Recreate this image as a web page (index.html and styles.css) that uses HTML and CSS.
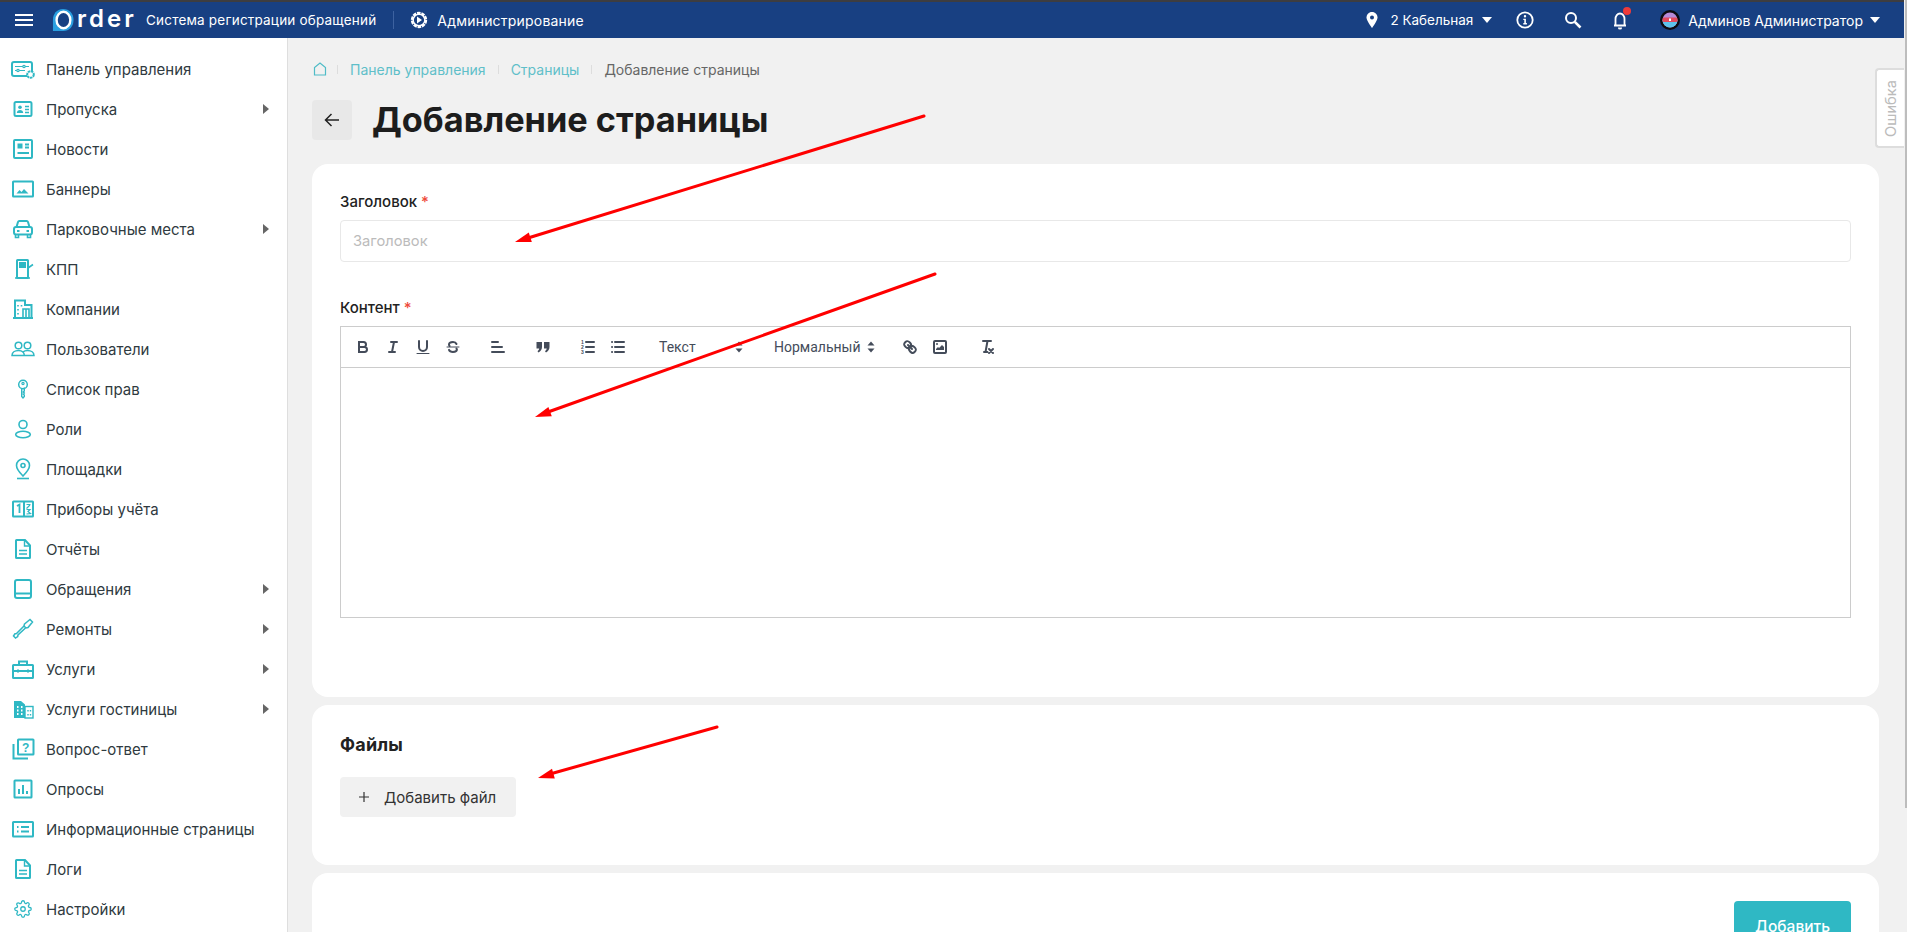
FILE: index.html

```html
<!DOCTYPE html>
<html lang="ru">
<head>
    <meta charset="UTF-8">
    <meta name="viewport" content="width=device-width, initial-scale=1.0">
    <title>Добавление страницы</title>
    <link rel="stylesheet" href="styles.css">
</head>
<body>
    <div class="page">
        <div class="app">
            <!-- Top bar -->
            <header class="topbar">
                <button class="burger"><span></span><span></span><span></span></button>
                <div class="logo">
                    <svg class="logo-mark" width="22" height="26" viewBox="0 0 24 26">
                        <path d="M12 1C5 1 1 6.500 1 13v12h11c7 0 11.500-5 11.500-12S19 1 12 1z" fill="#2a9fe0"/>
                        <ellipse cx="12.500" cy="13" rx="7.500" ry="9" fill="#184082" stroke="#fff" stroke-width="2.600"/>
                    </svg>
                    <span class="logo-text">rder</span>
                </div>
                <span class="topbar-title">Система регистрации обращений</span>
                <span class="topbar-divider"></span>
                <svg class="admin-icon" width="20" height="20" viewBox="0 0 20 20">
                    <circle cx="10" cy="10" r="7" fill="none" stroke="#fff" stroke-width="2.400" stroke-dasharray="3.500 .9"/>
                    <circle cx="10" cy="10" r="5.800" fill="none" stroke="#fff" stroke-width="1.400"/>
                    <path d="M8 6.500l5 3.500-5 3.500z" fill="#fff"/>
                </svg>
                <span class="topbar-admin">Администрирование</span>

                <div class="topbar-right">
                    <svg class="pin-icon" width="14" height="18" viewBox="0 0 14 18">
                        <path d="M7 1C3.700 1 1.500 3.500 1.500 6.500 1.500 10 7 17 7 17s5.500-7 5.500-10.500C12.500 3.500 10.300 1 7 1z" fill="#fff"/>
                        <circle cx="7" cy="6.500" r="2" fill="#184082"/>
                    </svg>
                    <span class="site-name">2 Кабельная</span>
                    <span class="caret"></span>
                    <svg class="info-icon" width="18" height="18" viewBox="0 0 18 18">
                        <circle cx="9" cy="9" r="7.700" fill="none" stroke="#fff" stroke-width="1.800"/>
                        <circle cx="9" cy="5.300" r="1.200" fill="#fff"/>
                        <path d="M7.300 7.700h2.600v4.400h1v1.300H7.300v-1.300h1V9h-1z" fill="#fff"/>
                    </svg>
                    <svg class="search-icon" width="18" height="18" viewBox="0 0 18 18">
                        <circle cx="7" cy="7" r="5" fill="none" stroke="#fff" stroke-width="2"/>
                        <path d="M10.800 10.800L16.500 16.500" stroke="#fff" stroke-width="2.600"/>
                    </svg>
                    <div class="bell">
                        <svg width="18" height="20" viewBox="0 0 18 20">
                            <path d="M3 15.500h12M4.500 15V9c0-3 2-5.500 4.500-5.500S13.500 6 13.500 9v6" fill="none" stroke="#fff" stroke-width="1.800"/>
                            <path d="M7 17.500h4v.5a2 1.500 0 0 1-4 0z" fill="#fff"/>
                        </svg>
                        <span class="bell-dot"></span>
                    </div>
                    <svg class="avatar" width="20" height="20" viewBox="0 0 20 20">
                        <circle cx="10" cy="10" r="10" fill="#0b0b10"/>
                        <circle cx="10" cy="10" r="7.500" fill="#b58ad8"/>
                        <path d="M2.500 10a7.500 7.500 0 0 0 15 0z" fill="#5cc3ec"/>
                        <rect x="2.500" y="7.500" width="15" height="4.500" rx="1.500" fill="#e2495c"/>
                        <rect x="9" y="8.500" width="2" height="2.500" fill="#fff"/>
                    </svg>
                    <span class="user-name">Админов Администратор</span>
                    <span class="caret caret-user"></span>
                </div>
            </header>

            <div class="layout">
                <!-- Side menu -->
                <nav class="sidebar">
                    <a class="side-item">
                        <svg class="side-icon" viewBox="0 0 24 24"><rect x="1" y="5" width="20" height="14" rx="2"/><path d="M4 9.500h14M4 13.500h10" stroke-width="1.200"/><circle cx="13" cy="9.500" r="1.200" fill="#fff" stroke-width="1.200"/><circle cx="7" cy="13.500" r="1.200" fill="#fff" stroke-width="1.200"/><circle cx="19.500" cy="17.500" r="3.300" fill="#fff" stroke-dasharray="2.500 .6"/></svg>
                        <span class="side-label">Панель управления</span>
                    </a>
                    <a class="side-item has-sub">
                        <svg class="side-icon" viewBox="0 0 24 24"><rect x="3.500" y="5" width="17" height="14" rx="1.500"/><circle cx="9" cy="10.300" r="1.800" class="solid"/><path d="M5.800 16c0-2 1.400-3 3.200-3s3.200 1 3.200 3z" class="solid"/><path d="M14 9.500h4M14 12.500h4M14 15.500h4" stroke-width="1.400"/></svg>
                        <span class="side-label">Пропуска</span>
                        <span class="side-arrow"></span>
                    </a>
                    <a class="side-item">
                        <svg class="side-icon" viewBox="0 0 24 24"><rect x="3" y="3" width="18" height="18" rx="1"/><rect x="6.500" y="6.500" width="5" height="5" class="solid"/><path d="M14 7.500h4M14 10.500h4M6.500 16h11.500"/></svg>
                        <span class="side-label">Новости</span>
                    </a>
                    <a class="side-item">
                        <svg class="side-icon" viewBox="0 0 24 24"><rect x="2" y="4.500" width="20" height="15" rx=".5"/><path d="M5.500 16.500l3-3.500 2 2 2.500-3 4.500 4.500z" class="solid"/></svg>
                        <span class="side-label">Баннеры</span>
                    </a>
                    <a class="side-item has-sub">
                        <svg class="side-icon" viewBox="0 0 24 24"><path d="M5.500 10l1.500-5c.2-.6.700-1 1.300-1h7.400c.6 0 1.100.4 1.300 1l1.500 5"/><rect x="3" y="10" width="18" height="7.500" rx="2"/><path d="M6 14h2.500M15.500 14H18"/><path d="M4.500 18v2.500h3V18M16.500 18v2.500h3V18" stroke-width="1.600"/></svg>
                        <span class="side-label">Парковочные места</span>
                        <span class="side-arrow"></span>
                    </a>
                    <a class="side-item">
                        <svg class="side-icon" viewBox="0 0 24 24"><rect x="6" y="3" width="11" height="18" rx=".5"/><rect x="8" y="5" width="7" height="6" class="solid"/><path d="M4 21h15M17 11l5-3.500" stroke-width="1.600"/></svg>
                        <span class="side-label">КПП</span>
                    </a>
                    <a class="side-item">
                        <svg class="side-icon" viewBox="0 0 24 24"><path d="M4 20.500V3.500h10v4.500h6.500v12.500"/><path d="M2 21h20"/><path d="M7 8v1.500M7 12v1.500M7 16v1.500M10.500 8v1.500" stroke-width="1.600"/><path d="M12 20v-8h6v8M15 12v8" stroke-width="1.600"/></svg>
                        <span class="side-label">Компании</span>
                    </a>
                    <a class="side-item">
                        <svg class="side-icon" viewBox="0 0 24 24"><circle cx="7.500" cy="8.500" r="3.300" stroke-width="1.500"/><circle cx="16.500" cy="8.500" r="3.300" stroke-width="1.500"/><path d="M1 18.500c0-3 2.800-5 6.500-5 2 0 3.500.6 4.500 1.500 1-.9 2.500-1.500 4.500-1.500 3.700 0 6.500 2 6.500 5z" stroke-width="1.500"/><path d="M12 15c1 .8 1.300 2 1.300 3.500" stroke-width="1.500"/></svg>
                        <span class="side-label">Пользователи</span>
                    </a>
                    <a class="side-item">
                        <svg class="side-icon" viewBox="0 0 24 24"><circle cx="12" cy="7.500" r="4.300" stroke-width="1.500"/><circle cx="12" cy="6.500" r="1.100" stroke-width="1.200"/><path d="M10.700 11.500v8l1.300 1.500 1.300-1.500v-1.500l-1-1 1-1-1-1 1-1v-3.500" stroke-width="1.400"/></svg>
                        <span class="side-label">Список прав</span>
                    </a>
                    <a class="side-item">
                        <svg class="side-icon" viewBox="0 0 24 24"><circle cx="12" cy="7.500" r="4" stroke-width="1.600"/><ellipse cx="12" cy="17.500" rx="7.300" ry="3.300" stroke-width="1.600"/></svg>
                        <span class="side-label">Роли</span>
                    </a>
                    <a class="side-item">
                        <svg class="side-icon" viewBox="0 0 24 24"><path d="M12 19C8 15 5.500 12 5.500 8.500a6.500 6.500 0 0 1 13 0C18.500 12 16 15 12 19z" stroke-width="1.600"/><circle cx="12" cy="8.500" r="2" stroke-width="1.600"/><path d="M6 21.500h12" stroke-width="1.600"/></svg>
                        <span class="side-label">Площадки</span>
                    </a>
                    <a class="side-item">
                        <svg class="side-icon" viewBox="0 0 24 24"><rect x="2" y="4.500" width="20" height="15" rx=".5"/><path d="M13 4.500v15"/><path d="M6 9l2.500-1.500V16" stroke-width="1.800"/><path d="M15.500 7.500h4M19 8l-3.500 3.500M15.500 12.500h3.500l-2 2 2.500 2-4 .5" stroke-width="1.200"/></svg>
                        <span class="side-label">Приборы учёта</span>
                    </a>
                    <a class="side-item">
                        <svg class="side-icon" viewBox="0 0 24 24"><path d="M5.500 3h8.500l5 5.500v12c0 .3-.2.500-.5.500h-13c-.3 0-.5-.2-.5-.5v-17c0-.3.2-.5.500-.5z"/><path d="M13.500 3v6h5.500M8 13.500h8M8 17h8" stroke-width="1.400"/></svg>
                        <span class="side-label">Отчёты</span>
                    </a>
                    <a class="side-item has-sub">
                        <svg class="side-icon" viewBox="0 0 24 24"><rect x="4" y="3" width="16" height="18" rx="2"/><path d="M4 16.500h16"/></svg>
                        <span class="side-label">Обращения</span>
                        <span class="side-arrow"></span>
                    </a>
                    <a class="side-item has-sub">
                        <svg class="side-icon" viewBox="0 0 24 24"><path d="M13.500 7l5.500-4.500 2.500 2.500-4.500 5.500-2 .5-2-2z" stroke-width="1.500"/><path d="M13 9l-7.500 7.500-1.500.3-1.500 2.200 2 2 2.200-1.500.3-1.500L14.500 11" stroke-width="1.500"/></svg>
                        <span class="side-label">Ремонты</span>
                        <span class="side-arrow"></span>
                    </a>
                    <a class="side-item has-sub">
                        <svg class="side-icon" viewBox="0 0 24 24"><rect x="2" y="8" width="20" height="13" rx=".5"/><path d="M8 8V4.500h8V8M2 14h20"/><path d="M7 12.500v3M17 12.500v3" stroke-width="2"/></svg>
                        <span class="side-label">Услуги</span>
                        <span class="side-arrow"></span>
                    </a>
                    <a class="side-item has-sub">
                        <svg class="side-icon" viewBox="0 0 24 24"><path d="M3 21V4h7l4 3.500V21z" class="solid"/><rect x="14" y="9.500" width="8" height="11.500" stroke-width="1.400"/><path d="M6 10h1.500M10 10h1.500M6 13.500h1.500M10 13.500h1.500M6 17h1.500M10 17h1.500" stroke="#fff"/><path d="M17 13v1.500M19.500 13v1.500M17 17v1.500M19.500 17v1.500" stroke-width="1.400"/></svg>
                        <span class="side-label">Услуги гостиницы</span>
                        <span class="side-arrow"></span>
                    </a>
                    <a class="side-item">
                        <svg class="side-icon" viewBox="0 0 24 24"><rect x="7" y="2.500" width="15.500" height="15" rx=".5"/><path d="M2.500 7v14.500H17"/><text x="14.700" y="14.500" class="icon-char">?</text></svg>
                        <span class="side-label">Вопрос-ответ</span>
                    </a>
                    <a class="side-item">
                        <svg class="side-icon" viewBox="0 0 24 24"><rect x="3.500" y="3.500" width="17" height="17" rx=".5"/><path d="M8 17v-5M12 17V8M16 17v-3"/></svg>
                        <span class="side-label">Опросы</span>
                    </a>
                    <a class="side-item">
                        <svg class="side-icon" viewBox="0 0 24 24"><rect x="2" y="5" width="20" height="14.500" rx=".5"/><path d="M6 10h1.500M10 10h8M6 14.500h1.500M10 14.500h8"/></svg>
                        <span class="side-label">Информационные страницы</span>
                    </a>
                    <a class="side-item">
                        <svg class="side-icon" viewBox="0 0 24 24"><path d="M5.500 3h8.500l5 5.500v12c0 .3-.2.500-.5.500h-13c-.3 0-.5-.2-.5-.5v-17c0-.3.2-.5.500-.5z"/><path d="M13.500 3v6h5.500M8 13.500h8M8 17h8" stroke-width="1.400"/></svg>
                        <span class="side-label">Логи</span>
                    </a>
                    <a class="side-item">
                        <svg class="side-icon gear-icon" viewBox="0 0 24 24"><circle cx="12" cy="12" r="3"/><path d="M19.400 15a1.650 1.650 0 0 0 .33 1.820l.06.06a2 2 0 0 1 0 2.830 2 2 0 0 1-2.830 0l-.06-.06a1.650 1.650 0 0 0-1.820-.33 1.650 1.650 0 0 0-1 1.510V21a2 2 0 0 1-2 2 2 2 0 0 1-2-2v-.09A1.650 1.650 0 0 0 9 19.400a1.650 1.650 0 0 0-1.820.33l-.06.06a2 2 0 0 1-2.830 0 2 2 0 0 1 0-2.830l.06-.06a1.650 1.650 0 0 0 .33-1.820 1.650 1.650 0 0 0-1.510-1H3a2 2 0 0 1-2-2 2 2 0 0 1 2-2h.09A1.650 1.650 0 0 0 4.600 9a1.650 1.650 0 0 0-.33-1.820l-.06-.06a2 2 0 0 1 0-2.830 2 2 0 0 1 2.830 0l.06.06a1.650 1.650 0 0 0 1.820.33H9a1.650 1.650 0 0 0 1-1.510V3a2 2 0 0 1 2-2 2 2 0 0 1 2 2v.09a1.650 1.650 0 0 0 1 1.510 1.650 1.650 0 0 0 1.820-.33l.06-.06a2 2 0 0 1 2.830 0 2 2 0 0 1 0 2.830l-.06.06a1.650 1.650 0 0 0-.33 1.820V9a1.650 1.650 0 0 0 1.510 1H21a2 2 0 0 1 2 2 2 2 0 0 1-2 2h-.09a1.650 1.650 0 0 0-1.510 1z"/></svg>
                        <span class="side-label">Настройки</span>
                    </a>
                </nav>

                <!-- Main content -->
                <main class="content">
                    <div class="crumbs">
                        <svg class="crumb-home" width="14" height="14" viewBox="0 0 14 14"><path d="M1.500 13V5.500L7 1l5.500 4.500V13z" fill="none" stroke="#4fbcc7" stroke-width="1.200"/></svg>
                        <span class="crumb-sep"></span>
                        <a class="crumb-link">Панель управления</a>
                        <span class="crumb-sep"></span>
                        <a class="crumb-link">Страницы</a>
                        <span class="crumb-sep"></span>
                        <span class="crumb-current">Добавление страницы</span>
                    </div>

                    <div class="page-head">
                        <button class="back-btn">
                            <svg width="20" height="20" viewBox="0 0 20 20"><path d="M17 10H3.500M9.500 4l-6 6 6 6" fill="none" stroke="#222" stroke-width="1.500"/></svg>
                        </button>
                        <h1 class="page-title">Добавление страницы</h1>
                    </div>

                    <section class="card card-main">
                        <label class="field-label">Заголовок <span class="req">*</span></label>
                        <input class="text-input" type="text" placeholder="Заголовок">

                        <label class="field-label">Контент <span class="req">*</span></label>
                        <div class="editor">
                            <div class="toolbar">
                                <div class="tb-group">
                                    <button class="tb-btn"><svg viewBox="0 0 18 18"><path d="M5 4h4.500a2.500 2.500 0 0 1 0 5H5zM5 9h5.500a2.500 2.500 0 0 1 0 5H5z"/></svg></button>
                                    <button class="tb-btn"><svg viewBox="0 0 18 18"><path d="M7 4h6M5 14h6M8 14l2-10"/></svg></button>
                                    <button class="tb-btn"><svg viewBox="0 0 18 18"><path d="M5 3v6a4 4 0 0 0 8 0V3"/><path d="M3 15.500h12" stroke-width="1"/></svg></button>
                                    <button class="tb-btn"><svg viewBox="0 0 18 18"><path d="M3 9h12" stroke-width="1"/><path d="M12.500 6c-.5-1.200-2-2-3.500-2-2 0-4 1-4 2.500 0 .6.200 1.100.6 1.500M12.500 10.500c.2.400.4.800.4 1.100 0 1.500-2 2.400-4 2.400-1.700 0-3.400-.8-3.900-2.100"/></svg></button>
                                </div>
                                <div class="tb-group">
                                    <button class="tb-btn"><svg viewBox="0 0 18 18"><path d="M3 4h6M3 9h10M3 14h12"/></svg></button>
                                </div>
                                <div class="tb-group">
                                    <button class="tb-btn"><svg viewBox="0 0 18 18"><path class="tb-fill" d="M2.500 4h5.500v5c0 2.500-1.500 4.500-3.500 5.500l-1-1.300c1-.7 1.600-1.700 1.700-2.700H2.500z"/><path class="tb-fill" d="M10 4h5.500v5c0 2.500-1.500 4.500-3.500 5.500l-1-1.300c1-.7 1.600-1.700 1.700-2.700H10z"/></svg></button>
                                </div>
                                <div class="tb-group">
                                    <button class="tb-btn"><svg viewBox="0 0 18 18"><path d="M7 4h8M7 9h8M7 14h8"/><text x="2" y="5.800" class="tb-num">1</text><text x="2" y="10.800" class="tb-num">2</text><text x="2" y="15.800" class="tb-num">3</text></svg></button>
                                    <button class="tb-btn"><svg viewBox="0 0 18 18"><path d="M6 4h9M6 9h9M6 14h9M3 4h.1M3 9h.1M3 14h.1"/></svg></button>
                                </div>
                                <div class="tb-group">
                                    <div class="tb-picker picker-font">
                                        <span>Текст</span>
                                        <svg viewBox="0 0 18 18"><path d="M5.500 7.500L9 3.500l3.500 4zM5.500 10.500L9 14.500l3.500-4z" class="tb-fill"/></svg>
                                    </div>
                                </div>
                                <div class="tb-group">
                                    <div class="tb-picker picker-size">
                                        <span>Нормальный</span>
                                        <svg viewBox="0 0 18 18"><path d="M5.500 7.500L9 3.500l3.500 4zM5.500 10.500L9 14.500l3.500-4z" class="tb-fill"/></svg>
                                    </div>
                                </div>
                                <div class="tb-group">
                                    <button class="tb-btn"><svg viewBox="0 0 18 18"><path d="M7 7l4 4"/><path d="M8.900 4.577a3.476 3.476 0 0 1 .36 4.679A3.476 3.476 0 0 1 4.577 8.900C3.185 7.500 2.035 6.400 4.217 4.217S7.500 3.185 8.900 4.577zM13.423 9.100a3.476 3.476 0 0 0-4.679-.36 3.476 3.476 0 0 0 .36 4.679c1.392 1.392 2.500 2.542 4.679.36S14.815 10.500 13.423 9.100z"/></svg></button>
                                    <button class="tb-btn"><svg viewBox="0 0 18 18"><rect x="3" y="3" width="12" height="12" rx="1"/><circle cx="6" cy="6" r="1" class="tb-fill"/><path d="M5 12v-1l2-2 1 1 3-3 2 2v3z" class="tb-fill"/></svg></button>
                                </div>
                                <div class="tb-group tb-group-clean">
                                    <button class="tb-btn"><svg viewBox="0 0 18 18"><path d="M5 3h8M6 14h3.400M9.500 3L7.500 14"/><path d="M11 11l4 4M15 11l-4 4"/></svg></button>
                                </div>
                            </div>
                            <div class="editor-area"></div>
                        </div>
                    </section>

                    <section class="card card-files">
                        <h2 class="card-title">Файлы</h2>
                        <button class="file-btn">
                            <svg width="14" height="14" viewBox="0 0 14 14"><path d="M7 2v10M2 7h10" stroke="#333" stroke-width="1.200"/></svg>
                            <span>Добавить файл</span>
                        </button>
                    </section>

                    <section class="card card-actions">
                        <button class="submit-btn">Добавить</button>
                    </section>

                    <div class="error-tab"><span>Ошибка</span></div>
                </main>
            </div>
        </div>

        <div class="scroll-track"><div class="scroll-thumb"></div></div>
    </div>

    <!-- Red annotation arrows drawn over the screenshot -->
    <svg class="annotations" width="1907" height="932" viewBox="0 0 1907 932">
        <g fill="#f00" stroke="none">
            <polygon points="515,242 531.800,242.100 528.800,232.600"/>
            <polygon points="535,417 551.800,416.300 548.400,406.900"/>
            <polygon points="538,778 554.800,778.400 552,768.800"/>
        </g>
        <g stroke="#f00" stroke-width="3" stroke-linecap="round">
            <line x1="924" y1="116" x2="528" y2="238"/>
            <line x1="935" y1="274" x2="548" y2="412"/>
            <line x1="717" y1="727" x2="550" y2="774"/>
        </g>
    </svg>
</body>
</html>
```

FILE: styles.css

```css
* {
    margin: 0;
    padding: 0;
    box-sizing: border-box;
}

body {
    font-family: Inter, "Noto Sans", sans-serif;
    background-color: #f1f1f1;
    color: #333;
    height: 100vh;
    overflow: hidden;
    position: relative;
}

button {
    font-family: inherit;
    border: none;
    background: none;
}

.page {
    display: flex;
    height: 100vh;
}

.app {
    flex: 1;
    min-width: 0;
    display: flex;
    flex-direction: column;
}

/* Top bar */
.topbar {
    height: 38px;
    flex-shrink: 0;
    border-top: 2px solid #3d3d40;
    background-color: #184082;
    color: white;
    display: flex;
    align-items: center;
    padding-left: 15px;
    font-size: 13.500px;
}

.burger {
    width: 18px;
    display: flex;
    flex-direction: column;
    gap: 3px;
}

.burger span {
    height: 2px;
    background-color: white;
}

.logo {
    display: flex;
    align-items: center;
    margin-left: 19px;
    width: 94px;
}

.logo-mark {
    flex-shrink: 0;
}

.logo-text {
    font-size: 24px;
    font-weight: 600;
    letter-spacing: 3px;
    margin-left: 3px;
    line-height: 1;
    margin-top: -3px;
}

.topbar-title,
.topbar-admin {
    letter-spacing: 0.200px;
}

.topbar-divider {
    width: 1px;
    height: 18px;
    background-color: #3d62a0;
    margin-left: 17px;
}

.admin-icon {
    margin-left: 15px;
}

.topbar-admin {
    margin-left: 8px;
    font-size: 14px;
}

.topbar-right {
    margin-left: auto;
    display: flex;
    align-items: center;
}

.site-name {
    margin-left: 11px;
}

.caret {
    width: 0;
    height: 0;
    border-left: 5px solid transparent;
    border-right: 5px solid transparent;
    border-top: 6px solid white;
    margin-left: 9px;
}

.info-icon {
    margin-left: 24px;
}

.search-icon {
    margin-left: 30px;
}

.bell {
    position: relative;
    display: flex;
    margin-left: 29px;
}

.bell-dot {
    position: absolute;
    top: -3px;
    right: -2px;
    width: 8px;
    height: 8px;
    border-radius: 50%;
    background-color: #ee3a3a;
}

.avatar {
    margin-left: 31px;
}

.user-name {
    margin-left: 8px;
    font-size: 14px;
}

.caret-user {
    margin-left: 7px;
    margin-right: 24px;
}

/* Side menu */
.layout {
    flex: 1;
    min-height: 0;
    display: flex;
}

.sidebar {
    width: 288px;
    flex-shrink: 0;
    background-color: white;
    border-right: 1px solid #dedede;
    padding-top: 11px;
    overflow: hidden;
}

.side-item {
    height: 40px;
    display: flex;
    align-items: center;
    gap: 11px;
    padding-left: 11px;
    padding-right: 18px;
    font-size: 15px;
    color: #2f3a40;
}

.side-icon {
    width: 24px;
    height: 24px;
    flex-shrink: 0;
    fill: none;
    stroke: #2fb8c4;
    stroke-width: 2;
}

.side-icon .solid {
    fill: #2fb8c4;
    stroke: none;
}

.icon-char {
    font-size: 12px;
    font-weight: 700;
    font-family: "Liberation Sans", sans-serif;
    text-anchor: middle;
    fill: #2fb8c4;
    stroke: none;
}

.gear-icon {
    padding: 3px;
    stroke-width: 1.700;
}

.side-arrow {
    margin-left: auto;
    width: 0;
    height: 0;
    border-top: 5px solid transparent;
    border-bottom: 5px solid transparent;
    border-left: 6px solid #666;
}

/* Main content */
.content {
    flex: 1;
    min-width: 0;
    position: relative;
    padding: 19px 25px 0 24px;
    overflow: hidden;
}

.crumbs {
    height: 24px;
    display: flex;
    align-items: center;
    font-size: 14px;
    margin-bottom: 18px;
}

.crumb-home {
    margin-left: 1px;
    margin-right: -2px;
}

.crumb-sep {
    width: 1px;
    height: 9px;
    background-color: #ddd;
    margin: 0 12px 0 12px;
}

.crumb-link {
    color: #5fbfc9;
}

.crumb-current {
    color: #666;
}

.page-head {
    display: flex;
    align-items: center;
    gap: 20px;
    margin-bottom: 24px;
}

.back-btn {
    width: 40px;
    height: 40px;
    border-radius: 4px;
    background-color: #e8e8e8;
    display: flex;
    align-items: center;
    justify-content: center;
}

.page-title {
    font-size: 34.300px;
    font-weight: 700;
    color: #1d1d1d;
}

.card {
    background-color: white;
    border-radius: 16px;
    padding: 28px;
    margin-bottom: 8px;
}

.card-main {
    padding-bottom: 79px;
}

.field-label {
    display: block;
    height: 20px;
    line-height: 20px;
    font-size: 15px;
    font-weight: 500;
    color: #222;
    margin-bottom: 8px;
}

.req {
    color: #ee4a3a;
}

.text-input {
    display: block;
    width: 100%;
    height: 42px;
    border: 1px solid #e8e8e8;
    border-radius: 4px;
    padding: 0 12px;
    font-family: inherit;
    font-size: 14.700px;
    margin-bottom: 36px;
}

.text-input::placeholder {
    color: #bbb;
}

/* Editor */
.editor {
    height: 292px;
    border: 1px solid #ccc;
    display: flex;
    flex-direction: column;
}

.toolbar {
    height: 41px;
    flex-shrink: 0;
    border-bottom: 1px solid #ccc;
    display: flex;
    align-items: center;
    padding-left: 7px;
    font-family: Roboto, "Liberation Sans", sans-serif;
    font-size: 14px;
    color: #444c5a;
}

.tb-group {
    display: flex;
    align-items: center;
    margin-right: 15px;
}

.tb-group-clean {
    margin-left: 2px;
}

.tb-btn {
    width: 30px;
    height: 24px;
    display: flex;
    align-items: center;
    justify-content: center;
}

.tb-btn svg,
.tb-picker svg {
    width: 18px;
    height: 18px;
    fill: none;
    stroke: #444c5a;
    stroke-width: 2;
    stroke-linecap: round;
}

.tb-btn .tb-fill,
.tb-picker .tb-fill {
    fill: #444c5a;
    stroke: none;
}

.tb-num {
    font-family: "Liberation Sans", sans-serif;
    font-size: 5px;
    font-weight: 700;
    fill: #444c5a;
    stroke: none;
}

.tb-picker {
    display: flex;
    align-items: center;
    justify-content: space-between;
    padding-left: 11px;
}

.picker-font {
    width: 100px;
}

.picker-size {
    width: 117px;
}

.editor-area {
    flex: 1;
}

/* Files */
.card-files {
    padding-bottom: 48px;
}

.card-title {
    font-size: 18px;
    font-weight: 700;
    letter-spacing: 0.200px;
    color: #222;
    height: 24px;
    line-height: 24px;
    margin-bottom: 20px;
}

.file-btn {
    width: 176px;
    height: 40px;
    border-radius: 4px;
    background-color: #f1f1f1;
    display: flex;
    align-items: center;
    gap: 13px;
    padding-left: 17px;
    font-size: 15px;
    color: #333;
}

.card-actions {
    display: flex;
    justify-content: flex-end;
    height: 200px;
}

.submit-btn {
    width: 117px;
    height: 50px;
    border-radius: 4px;
    background-color: #2fb8c4;
    color: white;
    font-size: 15.500px;
    font-weight: 500;
}

/* Side tab for bug reports */
.error-tab {
    position: absolute;
    top: 30px;
    right: 0;
    width: 29px;
    height: 80px;
    background-color: white;
    border: 2px solid #ddd;
    border-right: none;
    border-radius: 4px 0 0 4px;
    display: flex;
    align-items: center;
    justify-content: center;
    font-size: 14.700px;
    color: #bbb;
}

.error-tab span {
    writing-mode: vertical-rl;
    transform: rotate(180deg);
}

.scroll-track {
    width: 3px;
    flex-shrink: 0;
    background-color: #f1f1f1;
    display: flex;
    justify-content: flex-end;
}

.scroll-thumb {
    width: 2px;
    height: 808px;
    background-color: #bdbdbd;
}

.annotations {
    position: absolute;
    top: 0;
    left: 0;
    pointer-events: none;
}
```
